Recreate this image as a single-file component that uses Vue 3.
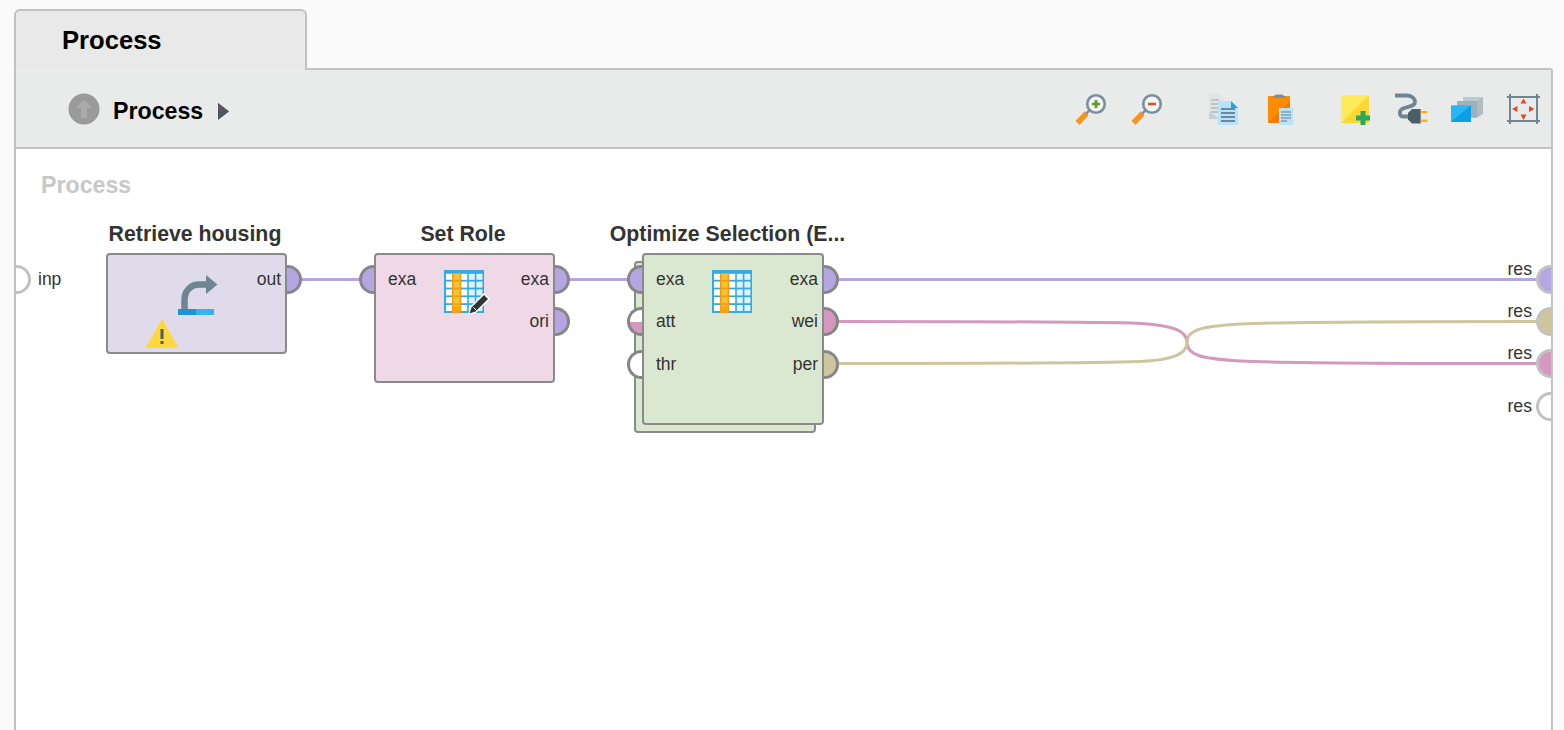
<script setup>
const O = { x: 16, y: 149 }
const purple = '#b5a5e3', pink = '#d598be', khaki = '#cdc69c', white = '#ffffff'

const nodes = [
  { id: 'ret', cls: 'lilac', title: 'Retrieve housing', cx: 195, x: 106, y: 253, w: 181, h: 101, icon: 'retrieve',
    ins: [], outs: [{ l: 'out', c: purple }] },
  { id: 'set', cls: 'rose', title: 'Set Role', cx: 463, x: 374, y: 253, w: 181, h: 130, icon: 'tablePen',
    ins: [{ l: 'exa', c: purple }], outs: [{ l: 'exa', c: purple }, { l: 'ori', c: purple }] },
  { id: 'opt', cls: 'sage', title: 'Optimize Selection (E...', cx: 727.5, x: 642, y: 253, w: 182, h: 172, icon: 'table', stacked: true,
    ins: [{ l: 'exa', c: purple }, { l: 'att', half: true }, { l: 'thr', c: white }],
    outs: [{ l: 'exa', c: purple }, { l: 'wei', c: pink }, { l: 'per', c: khaki }] }
]

const resPorts = [
  { y: 279.5, c: purple, ly: 269 },
  { y: 321.5, c: khaki, ly: 311 },
  { y: 363.5, c: pink, ly: 353 },
  { y: 406, c: white, ly: 406 }
]

const posOf = (x, y) => ({ left: x - O.x + 'px', top: y - O.y + 'px' })
const sizeOf = n => ({ ...posOf(n.x, n.y), width: n.w + 'px', height: n.h + 'px' })
const cells = []
for (let r = 0; r < 5; r++) for (let c = 0; c < 5; c++) cells.push({ x: 2 + c * 7.6, y: 3.8 + r * 7.8, c })
const cellFill = c => (c === 1 ? '#f7c336' : c > 2 ? '#ddf2fc' : '#ffffff')
</script>

<template>
  <div class="page">
    <div class="tab">Process</div>
    <div class="panel">
      <div class="toolbar">
        <div class="crumbs">
          <svg class="up" width="32" height="32" viewBox="0 0 32 32">
            <circle cx="16" cy="16" r="15.5" fill="#9a9a9a" />
            <path d="M16 7l8 8h-5v10h-6V15H8z" fill="#ababab" />
          </svg>
          <span class="crumb">Process</span>
          <svg class="caret" width="11" height="17" viewBox="0 0 11 17"><path d="M0 0l11 8.500L0 17z" fill="#4c5460" /><path d="M0 0l11 8.500H0z" fill="#5a5560" /></svg>
        </div>
        <div class="tools">
          <div class="group">
            <svg class="ico" viewBox="0 0 32 32">
              <path d="M2.500 29L11.500 19.500" stroke="#f7941d" stroke-width="5.500" />
              <path d="M11 20l4-4.500" stroke="#78909c" stroke-width="2.500" />
              <circle cx="21" cy="10" r="8.800" fill="#f3f4f4" stroke="#78909c" stroke-width="2.600" />
              <path d="M17 10h8M21 6v8" stroke="#5c9a2c" stroke-width="2.600" />
            </svg>
            <svg class="ico" viewBox="0 0 32 32">
              <path d="M2.500 29L11.500 19.500" stroke="#f7941d" stroke-width="5.500" />
              <path d="M11 20l4-4.500" stroke="#78909c" stroke-width="2.500" />
              <circle cx="21" cy="10" r="8.800" fill="#f3f4f4" stroke="#78909c" stroke-width="2.600" />
              <path d="M17 10h8" stroke="#d9522a" stroke-width="2.600" />
            </svg>
          </div>
          <div class="group">
            <svg class="ico" viewBox="0 0 32 32">
              <path d="M2 0h10l5 5v20H2z" fill="#e2e4e4" />
              <path d="M2 25h10L2 17z" fill="#c8d0d4" />
              <path d="M4 6h8M4 10h8M4 14h8M4 18h8" stroke="#9aa6ac" stroke-width="1.200" />
              <path d="M11 7h13l7 7v17H11z" fill="#b8e2f8" />
              <path d="M24 7l7 7h-7z" fill="#1fa3ea" />
              <path d="M14 15h14M14 19h14M14 23h14M14 27h14" stroke="#4f6d7c" stroke-width="1.400" />
            </svg>
            <svg class="ico" viewBox="0 0 32 32">
              <path d="M5 2h22v27H5z" fill="#ff8c00" />
              <path d="M5 29L27 7v22z" fill="#f47b00" />
              <path d="M10 4V2.500L13 .5h6l3 2V4z" fill="#78909c" />
              <path d="M16 14h14v17H16z" fill="#b8e2f8" />
              <path d="M18 18h10M18 21h10M18 24h10M18 27h6" stroke="#607d8b" stroke-width="1.200" />
            </svg>
          </div>
          <div class="group">
            <svg class="ico" viewBox="0 0 32 32">
              <path d="M2 1h28v28H2z" fill="#ffeb59" />
              <path d="M2 29L30 1v28z" fill="#fdd835" />
              <path d="M24 17v14M17 24h14" stroke="#2aa860" stroke-width="5" />
            </svg>
            <svg class="ico" viewBox="0 0 32 32">
              <path d="M0 1.500h11c6 0 9 3 9 6.500 0 5-8 4-13 7-3 2-3 7 1 7.500h6" fill="none" stroke="#6f8591" stroke-width="3.800" />
              <path d="M17 15h8.700v14.500H17l-4-4v-6.500z" fill="#4a5d69" />
              <path d="M25.700 18.300h6.600M25.700 26.700h6.600" stroke="#fbb216" stroke-width="2.400" />
            </svg>
            <svg class="ico" viewBox="0 0 32 32">
              <path d="M12 3h20v16.700H12z" fill="#bccad1" />
              <path d="M26 7l6-4v16.700l-6 4z" fill="#aebdc5" />
              <path d="M6 7h20v16.700H6z" fill="#9fb0b9" />
              <path d="M0 11.300h20V28H0z" fill="#29b6f6" />
              <path d="M0 28L20 11.300V28z" fill="#0d9fe6" />
            </svg>
            <svg class="ico" viewBox="0 0 32 32">
              <path d="M3 3h27v24H3z" fill="none" stroke="#6f8591" stroke-width="2" />
              <path d="M3 0v30M30 0v30M0 3h33M0 27h33" stroke="#6f8591" stroke-width="2" />
              <path d="M16.500 4.500l3 5h-6zM16.500 26l-3-5.500h6zM5 15l5.500-3v6zM27.500 15L22 12v6z" fill="#e2491e" />
            </svg>
          </div>
        </div>
      </div>

      <div class="canvas">
        <div class="canvas-name">Process</div>

        <svg class="wires" width="1535" height="581" viewBox="16 149 1535 581" fill="none" stroke-width="3">
          <path :stroke="purple" d="M301 279.500H361M569 279.500H629M838 279.500H1537" />
          <path :stroke="pink" d="M838 321.500C1000 321.500 1100 322 1140 323.500C1170 325 1187 330 1187 342.500C1187 355 1200 358.500 1240 361C1300 363.500 1400 363.500 1537 363.500" />
          <path :stroke="khaki" d="M838 363.500C1000 363.500 1100 363 1140 361.500C1170 360 1187 355 1187 342.500C1187 330 1200 326.500 1240 324C1300 321.500 1400 321.500 1537 321.500" />
        </svg>

        <div class="port out outer" :style="posOf(16, 265)"></div>
        <div class="outer-label" :style="posOf(38, 279)">inp</div>

        <template v-for="n in nodes" :key="n.id">
          <div class="title" :style="posOf(n.cx, 234)">{{ n.title }}</div>
          <div v-if="n.stacked" class="node" :class="n.cls" :style="sizeOf({ x: n.x - 8, y: n.y + 8, w: n.w, h: n.h })"></div>
          <div class="node" :class="n.cls" :style="sizeOf(n)">
            <div class="rows left-rows">
              <div v-for="p in n.ins" :key="p.l" class="row">
                <span class="port in" :class="{ half: p.half }" :style="p.c ? { background: p.c } : null"></span>
                <span class="lbl">{{ p.l }}</span>
              </div>
            </div>
            <div class="rows right-rows">
              <div v-for="p in n.outs" :key="p.l" class="row">
                <span class="lbl">{{ p.l }}</span>
                <span class="port out" :style="{ background: p.c }"></span>
              </div>
            </div>

            <svg v-if="n.icon === 'retrieve'" class="node-ico" width="181" height="101" viewBox="106 253 181 101">
              <path d="M184.500 309v-9c0-9 6-15.500 15-15.500h8" fill="none" stroke="#6e8692" stroke-width="6.500" />
              <path d="M206 275l11.500 9.500L206 294z" fill="#6e8692" />
              <path d="M178 309h18v6h-18z" fill="#1b93d6" />
              <path d="M196 309h18v6h-18z" fill="#35b5f0" />
              <path d="M162 319l16.500 29h-33z" fill="#ffd83b" />
              <path d="M160.500 329h3v10h-3zM160.500 341h3v3h-3z" fill="#4a5a66" />
            </svg>

            <svg v-if="n.icon !== 'retrieve'" class="table-ico" width="46" height="46" viewBox="0 0 46 46">
              <path d="M0 0h40v43H0z" fill="#36a9e1" />
              <path d="M8 3h9v40H8z" fill="#f59e0b" />
              <rect v-for="(c, i) in cells" :key="i" :x="c.x" :y="c.y" width="6" height="6" :fill="cellFill(c.c)" />
              <path d="M10 36h5.500v5.500H10z" fill="#f7a416" />
              <template v-if="n.icon === 'tablePen'">
                <path d="M24 45l2.500-8.500L40 23l6 6-13.500 13.500z" fill="#fff" />
                <path d="M25.500 43.500l2-6L40 25l4 4-12.500 12.500z" fill="#333" />
                <path d="M29.500 37.500l3 3" stroke="#fff" stroke-width="1" />
              </template>
            </svg>
          </div>
        </template>

        <template v-for="r in resPorts" :key="r.y">
          <div class="port in outer" :style="{ ...posOf(1536, r.y - 14.5), background: r.c }"></div>
          <div class="res-label" :style="{ top: r.ly - O.y + 'px' }">res</div>
        </template>
      </div>
    </div>
  </div>
</template>

<style scoped>
.page {
  width: 1564px;
  height: 730px;
  box-sizing: border-box;
  padding: 9px 11px 0 14px;
  background: #fafafa;
  overflow: hidden;
  font-family: "Liberation Sans", Arial, sans-serif;
  display: flex;
  flex-direction: column;
  align-items: flex-start;
}
.tab {
  position: relative;
  z-index: 2;
  flex: none;
  width: 293px;
  height: 61px;
  box-sizing: border-box;
  margin-bottom: -2px;
  padding: 15px 0 0 46px;
  background: #e9e9e9;
  border: 2px solid #c2c2c2;
  border-bottom: 0;
  border-radius: 6px 6px 0 0;
  font-size: 25.6px;
  line-height: 28px;
  font-weight: 700;
  color: #000;
}
.panel {
  align-self: stretch;
  flex: 1;
  min-height: 0;
  display: flex;
  flex-direction: column;
  border: 2px solid #c2c2c2;
  border-bottom: 0;
  border-radius: 3px 3px 0 0;
  background: #fff;
}
.toolbar {
  flex: none;
  height: 77px;
  display: flex;
  justify-content: space-between;
  align-items: center;
  padding: 0 12px 0 52px;
  background: #e9ebea;
  border-bottom: 2px solid #c2c2c2;
}
.crumbs {
  display: flex;
  align-items: center;
  margin-top: 1px;
}
.up { margin-right: 13px; }
.crumb {
  font-size: 23.2px;
  font-weight: 700;
  color: #000;
  margin-right: 15px;
  transform: translateY(2px);
}
.caret { transform: translateY(2px); }
.tools { display: flex; gap: 44px; margin-top: 2px; }
.group { display: flex; gap: 24px; }
.ico { width: 32px; height: 32px; display: block; overflow: visible; }
.canvas {
  position: relative;
  flex: 1;
  min-height: 0;
  overflow: hidden;
  background: #fff;
}
.canvas-name {
  position: absolute;
  left: 25px;
  top: 23px;
  font-size: 23.2px;
  line-height: 26px;
  font-weight: 700;
  color: #c8c8c8;
}
.wires { position: absolute; left: 0; top: 0; }
.title {
  position: absolute;
  transform: translate(-50%, -50%);
  white-space: nowrap;
  font-size: 21.3px;
  font-weight: 700;
  color: #333;
}
.node {
  position: absolute;
  box-sizing: border-box;
  border: 2px solid #8a8a8a;
  border-radius: 4px;
}
.lilac { background: #dfdbea; }
.rose { background: #f0d9e7; }
.sage { background: #dbe8d1; }
.rows {
  position: absolute;
  top: 10px;
  display: flex;
  flex-direction: column;
  gap: 13px;
}
.left-rows { left: -17px; }
.right-rows { right: -17px; align-items: flex-end; }
.row {
  display: flex;
  align-items: center;
  height: 29px;
}
.row:nth-child(3) { margin-top: 1px; }
.lbl {
  font-size: 17.5px;
  color: #333;
}
.left-rows .lbl { margin-left: 14px; }
.right-rows .lbl { margin-right: 6px; }
.port {
  display: block;
  flex: none;
  box-sizing: border-box;
  width: 15px;
  height: 29px;
  border: 3px solid #868686;
}
.port.out { border-left: 0; border-radius: 0 15px 15px 0; }
.port.in { border-right: 0; border-radius: 15px 0 0 15px; }
.port.half { background: linear-gradient(#fff 50%, #d598be 50%); }
.outer { position: absolute; border-color: #c2c2c2; background: #fff; }
.outer-label {
  position: absolute;
  transform: translateY(-50%);
  font-size: 17.5px;
  color: #333;
}
.res-label {
  position: absolute;
  right: 19px;
  transform: translateY(-50%);
  font-size: 17.7px;
  color: #333;
}
.node-ico { position: absolute; left: -2px; top: -2px; pointer-events: none; }
.table-ico { position: absolute; left: 68px; top: 15px; }
</style>
